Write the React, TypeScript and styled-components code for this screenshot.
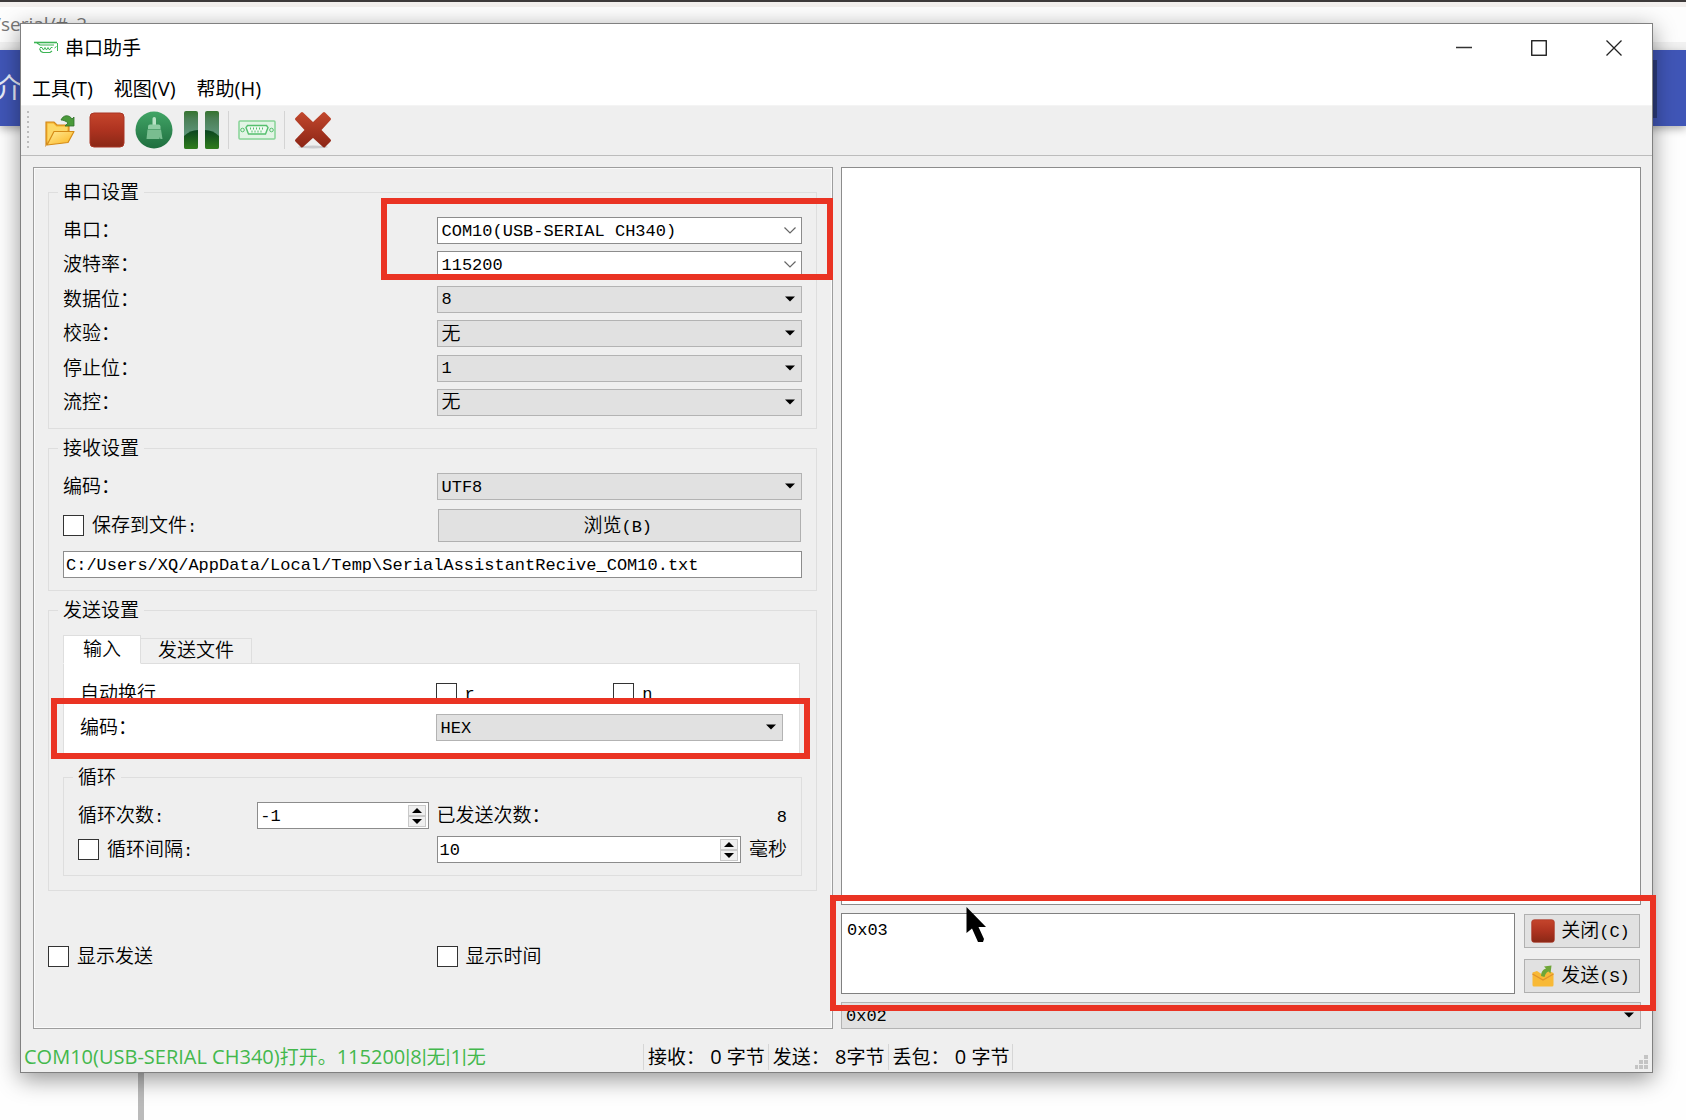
import React, { useId, useState } from "react";
import styled, { createGlobalStyle, css } from "styled-components";

const FORM_FONT = `"Liberation Mono", "Noto Sans CJK SC", monospace`;
const UI_FONT = `"Open Sans", "Noto Sans CJK SC", sans-serif`;
const FACE = "#efefef";
const LINE = "#dedede";

const GlobalStyle = createGlobalStyle`
  *, *::before, *::after { box-sizing: border-box; }
  html, body, #root { height: 100%; }
  body { margin: 0; background: #fff; color: #000; font: 350 19px/20px ${FORM_FONT}; overflow: hidden; }
  button, input, select, textarea { font: inherit; color: inherit; margin: 0; }
`;

/* ---------- page behind the window ---------- */

const Desktop = styled.div`
  position: relative;
  height: 100vh;
  min-height: 1120px;
  overflow: hidden;
  background: #fefefe;
`;

const AddressBar = styled.div`
  height: 50px;
  border-top: 2px solid #3d3a3a;
  border-bottom: 8px solid #f1f1f1;
  background: linear-gradient(#f3f0ee 5px, #fdfdfd 5px);
  color: #777;
  font: 19px/44px ${UI_FONT};
  white-space: nowrap;
  text-indent: -6px;
`;

const SiteHeader = styled.div`
  display: flex;
  justify-content: space-between;
  height: 76px;
  background: #4056b7;
  color: #e8ebf8;
  font: 28px/74px ${UI_FONT};
  text-indent: -5px;
  box-shadow: 0 3px 8px rgba(0, 0, 0, 0.3);
`;

const HeaderEdge = styled.span`
  width: 10px;
  height: 58px;
  margin: 10px 29px 0 0;
  background: #2c3c7d;
`;

const PageRule = styled.div`
  width: 6px;
  height: 994px;
  margin-left: 138px;
  background: #bababa;
`;

/* ---------- window frame ---------- */

const Window = styled.main`
  position: absolute;
  inset: 23px 33px 47px 20px;
  display: flex;
  flex-direction: column;
  border: 1px solid #808080;
  background: ${FACE};
  box-shadow: 0 6px 22px rgba(0, 0, 0, 0.42);
`;

const TitleBar = styled.header`
  display: flex;
  align-items: center;
  height: 49px;
  padding: 0 1px 2px 13px;
  background: #fff;
  font-family: ${UI_FONT};
  font-weight: 400;
`;

const Title = styled.h1`
  flex: 1;
  margin: 0 0 0 6px;
  font: inherit;
`;

const CaptionButton = styled.button`
  display: grid;
  place-items: center;
  width: 75px;
  height: 47px;
  padding: 0;
  border: 0;
  background: none;
`;

const MenuBar = styled.nav`
  display: flex;
  height: 33px;
  padding-left: 1px;
  border-bottom: 1px solid #f4f4f4;
  background: #fff;
`;

const MenuItem = styled.button`
  padding: 0 11px 0 10px;
  border: 0;
  background: none;
  font-family: ${UI_FONT};
  font-weight: 400;
  line-height: 30px;
`;

const ToolBar = styled.div`
  display: flex;
  align-items: center;
  height: 50px;
  padding: 0 0 1px 6px;
  border-bottom: 1px solid #bcbcbc;
`;

const Grip = styled.span`
  width: 2px;
  height: 38px;
  margin-right: 7px;
  background: repeating-linear-gradient(#bdbdbd 0 2px, transparent 2px 5px);
`;

const ToolButton = styled.button`
  display: grid;
  place-items: center;
  width: 47px;
  height: 46px;
  padding: 0;
  border: 0;
  background: none;
`;

const ToolSeparator = styled.span`
  width: 1px;
  height: 38px;
  margin: 0 4px;
  background: #d4d4d4;
`;

const Body = styled.div`
  flex: 1;
  display: grid;
  grid-template-columns: 1fr 1fr;
  gap: 8px;
  min-height: 0;
  padding: 11px 11px 0 12px;
`;

/* ---------- settings panel ---------- */

const Panel = styled.section`
  position: relative;
  display: flex;
  flex-direction: column;
  padding: 14px 15px 0 14px;
  border: 1px solid #9d9d9d;
  box-shadow: inset 1px 1px 0 #fafafa, inset -1px -1px 0 #fafafa;
`;

const Group = styled.fieldset<{ $bottom: number; $gap: number }>`
  min-width: 0;
  margin: 0 0 ${(p) => p.$gap}px;
  padding: 15px 14px ${(p) => p.$bottom}px;
  border: 1px solid ${LINE};
`;

const Legend = styled.legend`
  height: 20px;
  margin-left: -5px;
  padding: 0 5px;
  line-height: 24px;
`;

const Rows = styled.div<{ $gap: number; $min?: number }>`
  display: grid;
  row-gap: ${(p) => p.$gap}px;
  align-content: space-between;
  min-height: ${(p) => p.$min ?? 0}px;
`;

const Halves = styled.div`
  display: grid;
  grid-template-columns: 1fr 1fr;
  column-gap: 8px;
  align-items: center;
`;

const Spread = styled.div`
  display: flex;
  align-items: center;
  justify-content: space-between;
  gap: 8px;
`;

const formText = css`
  padding-top: 3px;
  line-height: 18px;
`;

const Caption = styled.label`
  ${formText}
`;

const Latin = styled.span`
  font-size: 17px;
`;

const CheckLabel = styled.label`
  display: flex;
  align-items: center;
  gap: 8px;
  white-space: nowrap;
`;

const ItemText = styled.span`
  ${formText}
`;

const CheckBox = styled.input`
  appearance: none;
  flex: none;
  width: 21px;
  height: 21px;
  border: 1px solid #333;
  background: #fff;
`;

const controlBox = css`
  width: 100%;
  height: 27px;
  border: 1px solid #8c8c8c;
  border-radius: 0;
  background: #fff;
  outline: 0;
`;

const ComboFrame = styled.div`
  position: relative;
  display: flex;
`;

const ComboSelect = styled.select<{ $editable?: boolean; $cjk?: boolean }>`
  ${controlBox}
  appearance: none;
  padding: 2px 24px 0 4px;
  border-color: ${(p) => (p.$editable ? "#8c8c8c" : "#b3b3b3")};
  background: ${(p) => (p.$editable ? "#fff" : "#e1e1e1")};
  font-size: ${(p) => (p.$cjk ? 19 : 17)}px;
`;

const ComboArrow = styled.svg`
  position: absolute;
  top: 0;
  right: 5px;
  height: 100%;
  pointer-events: none;
`;

const TextField = styled.input`
  ${controlBox}
  padding: 2px 2px 0;
  font-size: 17px;
`;

const PushButton = styled.button<{ $height: number }>`
  display: flex;
  align-items: center;
  justify-content: center;
  gap: 6px;
  height: ${(p) => p.$height}px;
  margin: 0 1px;
  padding: 0 3px 0 0;
  border: 1px solid #b0b0b0;
  background: #e1e1e1;
  white-space: nowrap;
`;

const SpinFrame = styled.div`
  flex: 1;
  display: flex;
  align-items: center;
  height: 27px;
  padding-right: 2px;
  border: 1px solid #8c8c8c;
  background: #fff;
`;

const SpinInput = styled.input`
  flex: 1;
  width: 0;
  min-width: 0;
  padding: 2px 2px 0;
  border: 0;
  outline: 0;
  background: none;
  font-size: 17px;
  appearance: textfield;
  &::-webkit-inner-spin-button { appearance: none; margin: 0; }
`;

const SpinButtons = styled.span`
  display: grid;
  width: 18px;
`;

const SpinButton = styled.button`
  display: grid;
  place-items: center;
  height: 11px;
  padding: 0;
  border: 1px solid #c9c9c9;
  background: #efefef;
`;

const Tabs = styled.div`
  display: flex;
  align-items: flex-end;
  margin-bottom: -1px;
`;

const Tab = styled.button<{ $active?: boolean }>`
  height: ${(p) => (p.$active ? 29 : 26)}px;
  padding: ${(p) => (p.$active ? "2px 19px 0" : "2px 17px 0")};
  border: 1px solid ${LINE};
  border-left-width: ${(p) => (p.$active ? 1 : 0)}px;
  border-bottom-color: ${(p) => (p.$active ? "#fff" : LINE)};
  background: ${(p) => (p.$active ? "#fff" : "#f0f0f0")};
`;

const TabPane = styled.div`
  margin: 0 2px 10px 0;
  padding: 18px 16px 15px;
  border: 1px solid ${LINE};
  background: #fff;
`;

const DisplayOptions = styled.div`
  padding-top: 55px;
`;

/* ---------- transfer side ---------- */

const Transfer = styled.section`
  display: flex;
  flex-direction: column;
  gap: 8px;
`;

const Received = styled.textarea`
  flex: 1;
  padding: 5px;
  border: 1px solid #8c8c8c;
  outline: 0;
  resize: none;
  background: #fff;
`;

const Compose = styled.div`
  position: relative;
  display: grid;
  grid-template-columns: 1fr 118px;
  gap: 8px;
  height: 81px;
`;

const Outgoing = styled.textarea`
  padding: 7px 5px;
  border: 1px solid #808080;
  outline: 0;
  resize: none;
  background: #fff;
  font-size: 17px;
`;

const ComposeButtons = styled.div`
  display: flex;
  flex-direction: column;
  justify-content: space-between;
  padding: 1px 0;
`;

const Pointer = styled.svg`
  position: absolute;
  top: -6px;
  left: 125px;
`;

/* ---------- status bar ---------- */

const StatusBar = styled.footer`
  display: flex;
  align-items: center;
  height: 43px;
  padding-top: 13px;
  font: 19px/26px ${UI_FONT};
  white-space: pre;
`;

const StatusMessage = styled.output`
  flex: 0 0 622px;
  padding-left: 3px;
  color: #43b84c;
`;

const StatusItem = styled.span`
  padding: 0 3px 0 4px;
  border-left: 1px solid #d6d6d6;
  &:last-of-type { border-right: 1px solid #d6d6d6; }
`;

const UiLatin = styled.span`
  font-size: 20px;
`;

const Divider = styled.span`
  font-family: Roboto, sans-serif;
`;

const SizeGrip = styled.svg`
  align-self: flex-end;
  margin: 0 3px 2px auto;
`;

/* ---------- red call-outs ---------- */

const Callout = styled.div<{ $box: string; $height?: number }>`
  position: absolute;
  inset: ${(p) => p.$box};
  height: ${(p) => (p.$height ? `${p.$height}px` : "auto")};
  border: 6px solid #ea3323;
  pointer-events: none;
  z-index: 2;
`;

/* ---------- icons ---------- */

const AppIcon = () => (
  <svg width="25" height="13" viewBox="0 0 25 13" fill="none" stroke="#3cb454">
    <path d="M0 1.5h23" strokeWidth="1.600" />
    <path d="M3 2l3 2h14M5.500 7.500l1.500 3 2 1h7l2-1.500" strokeWidth="1.200" />
    <path d="M6 6.500h2l1.500 2.500L11 6.500l1.500 2.500L14 6.500l1.500 2.500L17 6.500h1.500" />
    <path d="M23.500 2v8M20.500 7l2-1.500" />
  </svg>
);

const FolderIcon = () => (
  <svg width="32" height="34" viewBox="0 0 32 34">
    <defs>
      <linearGradient id="folderFront" x1="0" y1="0" x2="1" y2="1">
        <stop offset="0" stopColor="#ffeb9a" />
        <stop offset="1" stopColor="#fbb41c" />
      </linearGradient>
    </defs>
    <path d="M2 32V9h8l3 3h12v6H10z" fill="#f5b02c" stroke="#d38a1c" strokeWidth="1.200" />
    <path d="M3.500 31V10.500h6l3 3h11V18" fill="#fcd765" />
    <path d="M3 32L10 18.500h20L24 29.500z" fill="url(#folderFront)" stroke="#d58b16" strokeWidth="1.200" strokeLinejoin="round" />
    <path d="M17 7c2-5 8-6 11-1l2-2v9h-9l3-3c-2-2-5-3-7-3z" fill="#4a9a3a" stroke="#2f6f2a" strokeWidth=".8" />
  </svg>
);

const StopIcon = ({ size }: { size: number }) => (
  <svg width={size} height={size} viewBox="0 0 36 36">
    <defs>
      <linearGradient id={`stop${size}`} x1="0" y1="0" x2="0" y2="1">
        <stop offset="0" stopColor="#c5452c" />
        <stop offset=".5" stopColor="#ae3320" />
        <stop offset="1" stopColor="#8a2816" />
      </linearGradient>
    </defs>
    <rect x="1" y="1" width="34" height="34" rx="4" fill={`url(#stop${size})`} stroke="#a93524" />
  </svg>
);

const BrushIcon = () => (
  <svg width="38" height="38" viewBox="0 0 38 38">
    <defs>
      <linearGradient id="brushDisc" x1="0" y1="0" x2="0" y2="1">
        <stop offset="0" stopColor="#41a566" />
        <stop offset="1" stopColor="#1f6e3f" />
      </linearGradient>
    </defs>
    <circle cx="19" cy="19" r="18.500" fill="url(#brushDisc)" />
    <rect x="17.500" y="6" width="3.500" height="9" rx="1.700" fill="#b9e2c6" />
    <path d="M13 15.500q0-2 2-2h8.500q2 0 2 2V18H13z" fill="#8fcda4" />
    <path d="M12.500 18.500h13.500L27.500 28h-2l-1-2v2h-13z" fill="#79bd90" />
  </svg>
);

const PauseIcon = () => (
  <svg width="36" height="38" viewBox="0 0 36 38">
    <defs>
      <linearGradient id="pauseBar" x1="0" y1="0" x2="0" y2="1">
        <stop offset="0" stopColor="#35732f" />
        <stop offset=".2" stopColor="#4a7f55" />
        <stop offset=".6" stopColor="#5d9478" />
      </linearGradient>
      <linearGradient id="pauseBase" x1="0" y1="0" x2="0" y2="1">
        <stop offset="0" stopColor="#0a4420" />
        <stop offset="1" stopColor="#2f7d1c" />
      </linearGradient>
    </defs>
    <rect x="1" width="14" height="38" rx="2" fill="url(#pauseBar)" />
    <rect x="22" width="14" height="38" rx="2" fill="url(#pauseBar)" />
    <path d="M1 25q6-6 14-6v17q0 2-2 2H3q-2 0-2-2z" fill="url(#pauseBase)" />
    <path d="M22 19q8 0 14 6v11q0 2-2 2H24q-2 0-2-2z" fill="url(#pauseBase)" />
  </svg>
);

const PortIcon = () => (
  <svg width="38" height="20" viewBox="0 0 38 20" fill="none" stroke="#55bf6e">
    <rect x="1" y="1" width="36" height="18" rx="1" fill="#e2f4e5" stroke="#86d396" strokeWidth="1.500" />
    <path d="M9.500 5.500h19l1.500 2-2.500 6.500h-17L8 7.500z" strokeWidth="1.400" fill="#effaf1" />
    <path d="M12 8.500h1m2 0h1m2 0h1m2 0h1m2 0h1M13.500 11.500h1m2 0h1m2 0h1m2 0h1" strokeWidth="2" />
    <circle cx="4.500" cy="10" r="1.800" />
    <circle cx="33.500" cy="10" r="1.800" />
  </svg>
);

const CrossIcon = () => (
  <svg width="38" height="38" viewBox="0 0 38 38">
    <defs>
      <linearGradient id="cross" x1="0" y1="0" x2="0" y2="1">
        <stop offset="0" stopColor="#c0462c" />
        <stop offset="1" stopColor="#8e2616" />
      </linearGradient>
    </defs>
    <ellipse cx="19" cy="36" rx="15" ry="1.500" fill="#c9c9cc" />
    <path
      d="M8 2.500L19 13 30 2.500 35.500 8 25.500 19l10 10.500L30 35 19 25 8 35l-5.500-5.500L12.500 19 2.500 8z"
      fill="url(#cross)"
      stroke="url(#cross)"
      strokeWidth="3"
      strokeLinejoin="round"
    />
  </svg>
);

const SendIcon = () => (
  <svg width="24" height="24" viewBox="0 0 24 24">
    <path d="M1.500 8.500L6 7l6 4 6-4 4.500 2v12q0 1.500-1.500 1.500H3q-1.500 0-1.500-1.500z" fill="#f8b936" />
    <path d="M1.500 10L12 16l10.500-6" fill="none" stroke="#e0922c" strokeWidth="1.300" />
    <path d="M10 12q0-6 5-7.500L13 2.500l7.500-1-1 8-2-2q-3 1-4 5.500z" fill="#6fa637" />
  </svg>
);

const DownTriangle = () => (
  <ComboArrow width="14" viewBox="0 0 14 27" preserveAspectRatio="xMidYMid meet" aria-hidden="true">
    <path d="M2 10.500h10L7 15.500z" fill="#000" />
  </ComboArrow>
);

const DownChevron = () => (
  <ComboArrow width="14" viewBox="0 0 14 27" preserveAspectRatio="xMidYMid meet" aria-hidden="true">
    <path d="M1.500 10.500L7 16l5.500-5.500" fill="none" stroke="#666" strokeWidth="1.200" />
  </ComboArrow>
);

/* ---------- parts ---------- */

const PRINTABLE_RUN = /([\x20-\x7e]+)/;

/* Form text: half-width runs are two pixels smaller than the Chinese glyphs. */
const Mixed = ({ text }: { text: string }) => (
  <>{text.split(PRINTABLE_RUN).map((run, i) => (i % 2 ? <Latin key={i}>{run}</Latin> : run))}</>
);

/* Window text: half-width runs are one pixel larger, with narrow vertical bars. */
const UiText = ({ text }: { text: string }) => (
  <>
    {text.split(PRINTABLE_RUN).map((run, i) =>
      i % 2 ? (
        <UiLatin key={i}>
          {run.split(/(\|)/).map((part, j) => (part === "|" ? <Divider key={j}>|</Divider> : part))}
        </UiLatin>
      ) : (
        run
      ),
    )}
  </>
);

type ComboProps = { id: string; value: string; editable?: boolean; label?: string };

const Combo = ({ id, value, editable, label }: ComboProps) => (
  <ComboFrame>
    <ComboSelect id={id} aria-label={label} $editable={editable} $cjk={value === "无"} defaultValue={value}>
      <option>{value}</option>
    </ComboSelect>
    {editable ? <DownChevron /> : <DownTriangle />}
  </ComboFrame>
);

const ComboRow = ({ label, value, editable }: { label: string; value: string; editable?: boolean }) => {
  const id = useId();
  return (
    <Halves>
      <Caption htmlFor={id}>{label}</Caption>
      <Combo id={id} value={value} editable={editable} />
    </Halves>
  );
};

const Check = ({ text }: { text: string }) => (
  <CheckLabel>
    <CheckBox type="checkbox" />
    <ItemText><Mixed text={text} /></ItemText>
  </CheckLabel>
);

const Spin = ({ id, initial, label }: { id: string; initial: number; label: string }) => {
  const [value, setValue] = useState(initial);
  return (
    <SpinFrame>
      <SpinInput
        id={id}
        type="number"
        aria-label={label}
        value={value}
        onChange={(e) => setValue(Number(e.target.value))}
      />
      <SpinButtons>
        <SpinButton type="button" aria-label="+" onClick={() => setValue(value + 1)}>
          <svg width="10" height="5"><path d="M0 5h10L5 0z" /></svg>
        </SpinButton>
        <SpinButton type="button" aria-label="-" onClick={() => setValue(value - 1)}>
          <svg width="10" height="5"><path d="M0 0h10L5 5z" /></svg>
        </SpinButton>
      </SpinButtons>
    </SpinFrame>
  );
};

const PORT_ROWS = [
  { label: "串口：", value: "COM10(USB-SERIAL CH340)", editable: true },
  { label: "波特率：", value: "115200", editable: true },
  { label: "数据位：", value: "8" },
  { label: "校验：", value: "无" },
  { label: "停止位：", value: "1" },
  { label: "流控：", value: "无" },
];

const SettingsPanel = () => (
  <Panel>
    <Group $bottom={12} $gap={9}>
      <Legend>串口设置</Legend>
      <Rows $gap={7} $min={199}>
        {PORT_ROWS.map((row) => (
          <ComboRow key={row.label} {...row} />
        ))}
      </Rows>
    </Group>

    <Group $bottom={12} $gap={9}>
      <Legend>接收设置</Legend>
      <Rows $gap={9}>
        <ComboRow label="编码：" value="UTF8" />
        <Halves>
          <Check text="保存到文件:" />
          <PushButton type="button" $height={33}>
            <ItemText><Mixed text="浏览(B)" /></ItemText>
          </PushButton>
        </Halves>
        <TextField
          type="text"
          aria-label="保存到文件"
          defaultValue={"C:/Users/XQ/AppData/Local/Temp\\SerialAssistantRecive_COM10.txt"}
        />
      </Rows>
    </Group>

    <Group $bottom={14} $gap={0}>
      <Legend>发送设置</Legend>
      <Tabs role="tablist">
        <Tab type="button" role="tab" aria-selected="true" $active>输入</Tab>
        <Tab type="button" role="tab" aria-selected="false">发送文件</Tab>
      </Tabs>
      <TabPane role="tabpanel">
        <Rows $gap={10}>
          <Halves>
            <ItemText>自动换行</ItemText>
            <Halves>
              <Check text="r" />
              <Check text="n" />
            </Halves>
          </Halves>
          <ComboRow label="编码：" value="HEX" />
        </Rows>
      </TabPane>
      <Group $bottom={12} $gap={0}>
        <Legend>循环</Legend>
        <Rows $gap={7}>
          <Halves>
            <Halves>
              <Caption htmlFor="loop-count"><Mixed text="循环次数:" /></Caption>
              <Spin id="loop-count" initial={-1} label="循环次数" />
            </Halves>
            <Spread>
              <ItemText>已发送次数：</ItemText>
              <ItemText><Latin>8</Latin></ItemText>
            </Spread>
          </Halves>
          <Halves>
            <Check text="循环间隔:" />
            <Spread>
              <Spin id="loop-delay" initial={10} label="循环间隔" />
              <Caption htmlFor="loop-delay">毫秒</Caption>
            </Spread>
          </Halves>
        </Rows>
      </Group>
    </Group>

    <DisplayOptions>
      <Halves>
        <Check text="显示发送" />
        <Check text="显示时间" />
      </Halves>
    </DisplayOptions>

    <Callout $box="30px -1px auto calc(50% - 52px)" $height={82} />
    <Callout $box="530px 22px auto 17px" $height={61} />
  </Panel>
);

const TransferPanel = () => (
  <Transfer>
    <Received aria-label="接收" readOnly />
    <Compose>
      <Outgoing aria-label="发送" defaultValue="0x03" />
      <ComposeButtons>
        <PushButton type="button" $height={34}>
          <StopIcon size={24} />
          <ItemText><Mixed text="关闭(C)" /></ItemText>
        </PushButton>
        <PushButton type="button" $height={34}>
          <SendIcon />
          <ItemText><Mixed text="发送(S)" /></ItemText>
        </PushButton>
      </ComposeButtons>
      <Pointer width="20" height="36" viewBox="0 0 20 36" aria-hidden="true">
        <path d="M.5 0v26l5.500-4.500 6 13.500h5l1-3-5.500-12H20z" fill="#000" />
      </Pointer>
      <Callout $box="-18px -15px -17px -11px" />
    </Compose>
    <Combo id="history" label="历史" value="0x02" />
  </Transfer>
);

export default function App() {
  return (
    <Desktop>
      <GlobalStyle />
      <AddressBar>/serial/#_2</AddressBar>
      <SiteHeader>
        <span>介</span>
        <HeaderEdge />
      </SiteHeader>
      <PageRule />

      <Window>
        <TitleBar>
          <AppIcon />
          <Title>串口助手</Title>
          <CaptionButton type="button" aria-label="最小化">
            <svg width="16" height="16"><path d="M0 7.500h16" stroke="#333" strokeWidth="1.500" /></svg>
          </CaptionButton>
          <CaptionButton type="button" aria-label="最大化">
            <svg width="16" height="16"><rect x=".75" y=".75" width="14.500" height="14.500" fill="none" stroke="#111" strokeWidth="1.300" /></svg>
          </CaptionButton>
          <CaptionButton type="button" aria-label="关闭">
            <svg width="16" height="16"><path d="M.5.5l15 15m0-15l-15 15" stroke="#222" strokeWidth="1.300" /></svg>
          </CaptionButton>
        </TitleBar>

        <MenuBar>
          <MenuItem type="button"><UiText text="工具(T)" /></MenuItem>
          <MenuItem type="button"><UiText text="视图(V)" /></MenuItem>
          <MenuItem type="button"><UiText text="帮助(H)" /></MenuItem>
        </MenuBar>

        <ToolBar role="toolbar">
          <Grip />
          <ToolButton type="button" aria-label="打开文件"><FolderIcon /></ToolButton>
          <ToolButton type="button" aria-label="关闭串口"><StopIcon size={36} /></ToolButton>
          <ToolButton type="button" aria-label="清空"><BrushIcon /></ToolButton>
          <ToolButton type="button" aria-label="暂停"><PauseIcon /></ToolButton>
          <ToolSeparator />
          <ToolButton type="button" aria-label="串口"><PortIcon /></ToolButton>
          <ToolSeparator />
          <ToolButton type="button" aria-label="退出"><CrossIcon /></ToolButton>
        </ToolBar>

        <Body>
          <SettingsPanel />
          <TransferPanel />
        </Body>

        <StatusBar>
          <StatusMessage><UiText text="COM10(USB-SERIAL CH340)打开。115200|8|无|1|无" /></StatusMessage>
          <StatusItem><UiText text="接收： 0 字节" /></StatusItem>
          <StatusItem><UiText text="发送： 8字节" /></StatusItem>
          <StatusItem><UiText text="丢包： 0 字节" /></StatusItem>
          <SizeGrip width="14" height="15" fill="#c4c4c4" aria-hidden="true">
            <path d="M9 0h4v4H9zM4 5h4v4H4zM9 5h4v4H9zM0 10h3v4H0zM4 10h4v4H4zM9 10h4v4H9z" />
          </SizeGrip>
        </StatusBar>
      </Window>
    </Desktop>
  );
}
